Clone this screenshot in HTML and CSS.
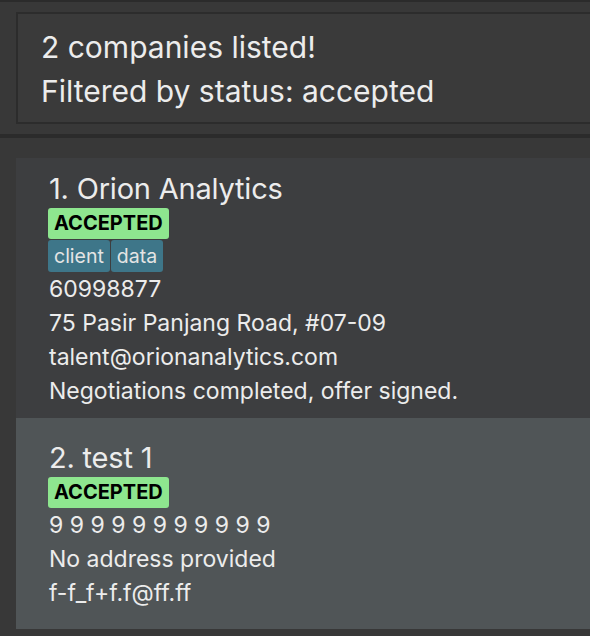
FILE: index.html
```html
<!DOCTYPE html>
<html>
<head>
<meta charset="utf-8">
<link rel="stylesheet" href="styles.css">
</head>
<body>
<div class="topbar"></div>
<div class="result-pane">
  <div class="result-box">
    <div class="result-line">2 companies listed!</div>
    <div class="result-line">Filtered by status: accepted</div>
  </div>
</div>
<div class="splitter"></div>
<div class="list">
  <div class="card card-first">
    <div class="title">1. Orion Analytics</div>
    <div class="badges"><span class="status">ACCEPTED</span></div>
    <div class="tags"><span class="tag">client</span><span class="tag">data</span></div>
    <div class="line">60998877</div>
    <div class="line">75 Pasir Panjang Road, #07-09</div>
    <div class="line">talent@orionanalytics.com</div>
    <div class="line">Negotiations completed, offer signed.</div>
  </div>
  <div class="card card-alt">
    <div class="title">2. test 1</div>
    <div class="badges"><span class="status">ACCEPTED</span></div>
    <div class="line">9 9 9 9 9 9 9 9 9 9 9</div>
    <div class="line">No address provided</div>
    <div class="line">f-f_f+f.f@ff.ff</div>
  </div>
</div>
</body>
</html>
```
FILE: styles.css
```css
html, body {
  margin: 0;
  padding: 0;
  background: #383838;
  font-family: "Inter", "Noto Sans", sans-serif;
  color: #ececec;
  overflow: hidden;
}
.topbar {
  height: 2px;
  background: #2b2b2b;
}
.result-pane {
  padding: 10px 0 10px 16px;
}
.result-box {
  box-sizing: border-box;
  height: 112px;
  border: 2px solid #2c2c2c;
  border-right: none;
  background: #3a3a3a;
  padding: 11px 0 0 23px;
}
.result-line {
  font-size: 30px;
  line-height: 44px;
  letter-spacing: 0;
  white-space: nowrap;
}
.splitter {
  height: 4px;
  background: #2b2b2b;
  margin-bottom: 20px;
}
.list {
  padding-left: 16px;
}
.card {
  padding-left: 33px;
  background: #3d3e40;
}
.card-first {
  padding-top: 13px;
  padding-bottom: 10px;
}
.card-alt {
  background: #505557;
  padding-top: 22px;
  padding-bottom: 19px;
}
.title {
  font-size: 29px;
  line-height: 36px;
  letter-spacing: -0.2px;
}
.badges {
  display: flex;
  margin-left: -1px;
  margin-top: 1px;
}
.status {
  background: #8ee68f;
  color: #000;
  font-weight: 700;
  font-size: 20px;
  line-height: 27px;
  padding: 2px 6px;
  border-radius: 3px;
}
.tags {
  display: flex;
  gap: 1px;
  margin-left: -1px;
  margin-top: 1px;
}
.tag {
  background: #3e7689;
  color: #e4e4e4;
  font-size: 19.5px;
  line-height: 28px;
  padding: 2px 6px;
  border-radius: 3px;
}
.line {
  font-size: 23px;
  line-height: 34px;
  white-space: nowrap;
}
```
